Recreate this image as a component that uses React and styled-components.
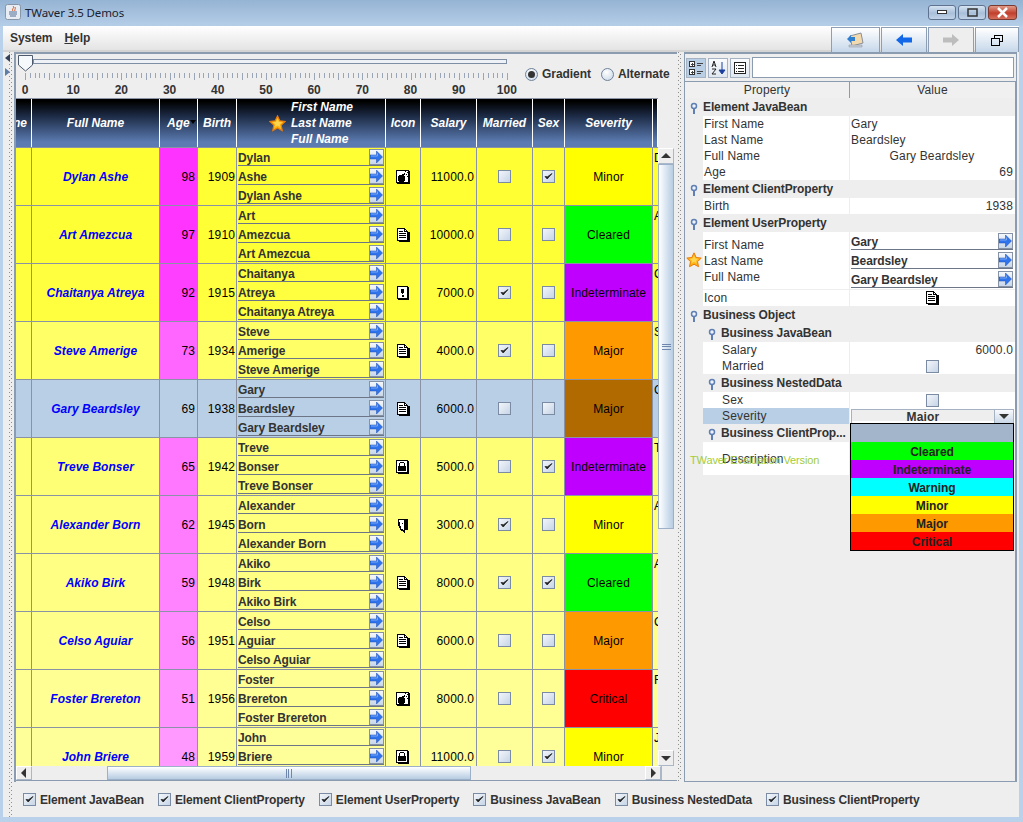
import React from 'react'
import styled, { createGlobalStyle } from 'styled-components'

const GlobalStyle = createGlobalStyle`
  html, body { margin: 0; padding: 0; background: #b9d1ea; }
  * { box-sizing: border-box; }
  body { font-family: "Liberation Sans", Arial, sans-serif; font-size: 12px; color: #333; }
`

const COLUMNS = '16px 128px 38px 39px 149px 35px 56px 56px 32px 88px 5px'
const GRID = '#8a93a6'
const SELECTED = '#b8cfe5'

const SEVERITY = {
  Minor: '#ffff00',
  Cleared: '#00ff00',
  Indeterminate: '#c000ff',
  Major: '#ff9900',
  Critical: '#ff0000',
  Warning: '#00ffff',
}

const people = [
  { first: 'Dylan', last: 'Ashe', age: 98, birth: 1909, icon: 'bomb', salary: '11000.0', married: false, sex: true, severity: 'Minor', note: 'D' },
  { first: 'Art', last: 'Amezcua', age: 97, birth: 1910, icon: 'doc', salary: '10000.0', married: false, sex: false, severity: 'Cleared', note: 'A' },
  { first: 'Chaitanya', last: 'Atreya', age: 92, birth: 1915, icon: 'alert', salary: '7000.0', married: true, sex: false, severity: 'Indeterminate', note: 'C' },
  { first: 'Steve', last: 'Amerige', age: 73, birth: 1934, icon: 'doc', salary: '4000.0', married: true, sex: false, severity: 'Major', note: 'S' },
  { first: 'Gary', last: 'Beardsley', age: 69, birth: 1938, icon: 'doc', salary: '6000.0', married: false, sex: false, severity: 'Major', note: 'G', selected: true },
  { first: 'Treve', last: 'Bonser', age: 65, birth: 1942, icon: 'lock', salary: '5000.0', married: false, sex: true, severity: 'Indeterminate', note: 'T' },
  { first: 'Alexander', last: 'Born', age: 62, birth: 1945, icon: 'door', salary: '3000.0', married: true, sex: false, severity: 'Minor', note: 'A' },
  { first: 'Akiko', last: 'Birk', age: 59, birth: 1948, icon: 'doc', salary: '8000.0', married: true, sex: true, severity: 'Cleared', note: 'A' },
  { first: 'Celso', last: 'Aguiar', age: 56, birth: 1951, icon: 'doc', salary: '6000.0', married: false, sex: false, severity: 'Major', note: 'C' },
  { first: 'Foster', last: 'Brereton', age: 51, birth: 1956, icon: 'bomb', salary: '8000.0', married: false, sex: false, severity: 'Critical', note: 'F' },
  { first: 'John', last: 'Briere', age: 48, birth: 1959, icon: 'lock', salary: '11000.0', married: false, sex: true, severity: 'Minor', note: 'J' },
]

// the colour fades as the age goes down
const fade = (age) => Math.round(51 + ((98 - age) / 50) * 102).toString(16).padStart(2, '0')

const Window = styled.div`
  width: 1023px;
  height: 822px;
  overflow: hidden;
  display: flex;
  flex-direction: column;
  background: #b9d1ea;
`
const TitleBar = styled.div`
  height: 26px;
  flex: none;
  display: flex;
  align-items: center;
  padding: 0 6px 2px 5px;
  background: linear-gradient(#95b3d3, #b5cee8);
`
const TitleText = styled.span`
  font-family: "Noto Sans", sans-serif;
  font-size: 11.5px;
  letter-spacing: -0.1px;
  color: #1a2230;
  margin-left: 4px;
  flex: 1;
`
const WindowButton = styled.div`
  width: ${(p) => p.$w}px;
  height: 15px;
  margin-left: 2px;
  border: 1px solid ${(p) => (p.$close ? '#7a3a30' : '#5f7390')};
  border-radius: 3px;
  display: flex;
  align-items: center;
  justify-content: center;
  background: ${(p) => (p.$close ? 'linear-gradient(#e09a88, #c23f2c 55%, #d5705c)' : 'linear-gradient(#d6e3f2, #a9bfd9 55%, #c2d3e8)')};
`
const Content = styled.div`
  flex: 1;
  min-height: 0;
  margin: 0 4px 5px 3px;
  display: flex;
  flex-direction: column;
  background: #eeeeee;
`
const MenuBar = styled.div`
  height: 26px;
  flex: none;
  display: flex;
  align-items: stretch;
  padding-left: 7px;
  background: linear-gradient(#ffffff, #e4e4e4);
  border-bottom: 2px solid #d4d4d4;
`
const MenuItem = styled.div`
  font-weight: bold;
  letter-spacing: -0.05px;
  color: #333;
  line-height: 24px;
  margin-right: 12px;
  u { text-decoration: underline; }
`
const ToolGroup = styled.div`
  margin-left: auto;
  display: flex;
  gap: 1px;
  margin-top: 1px;
`
const ToolButton = styled.div`
  width: ${(p) => p.$w}px;
  height: 25px;
  display: flex;
  align-items: center;
  justify-content: center;
  border: 1px solid #8d9fb4;
  border-bottom: none;
  background: ${(p) => (p.$disabled ? '#eeeeee' : 'linear-gradient(#ffffff, #c6d7ea)')};
`
const Workspace = styled.div`
  flex: 1;
  min-height: 0;
  display: flex;
`
const Dots = styled.div`
  width: ${(p) => p.$w}px;
  flex: none;
  position: relative;
  background-color: #eeeeee;
  background-image:
    conic-gradient(from 0deg at 1px 1px, transparent 75%, #8f8f8f 0),
    conic-gradient(from 0deg at 1px 1px, transparent 75%, #8f8f8f 0);
  background-size: 4px 4px;
  background-position: ${(p) => p.$x}px 0, ${(p) => p.$x + 2}px 2px;
  background-repeat: repeat-y;
`
const Expander = styled.div`
  position: absolute;
  left: 2px;
  width: 0;
  height: 0;
  border-top: 4px solid transparent;
  border-bottom: 4px solid transparent;
  ${(p) => (p.$right ? 'border-left: 5px solid #5e7ea8;' : 'border-right: 5px solid #33405a;')}
  top: ${(p) => p.$top}px;
`
const Body = styled.div`
  flex: 1;
  min-width: 0;
  display: flex;
  flex-direction: column;
`
const Panes = styled.div`
  height: 730px;
  flex: none;
  display: flex;
`
const LeftPane = styled.div`
  width: 663px;
  flex: none;
  display: flex;
  flex-direction: column;
  border-left: 2px solid #8b9bb0;
  border-top: 2px solid #8b9bb0;
`
const Controls = styled.div`
  height: 44px;
  flex: none;
  display: flex;
  align-items: flex-start;
`
const SliderBlock = styled.div`
  width: 498px;
  flex: none;
  position: relative;
  padding-top: 5px;
`
const SliderTrack = styled.div`
  margin-left: 17px;
  width: 474px;
  height: 5px;
  border: 1px solid #7e8fa5;
  background: #eef2f7;
`
const SliderThumb = styled.svg`
  position: absolute;
  left: 2px;
  top: 1px;
`
const Ticks = styled.svg`
  display: block;
  margin: 9px 0 0 0;
`
const Labels = styled.div`
  display: flex;
  justify-content: space-between;
  margin: 3px 0 0 -3px;
  width: 506px;
`
const RulerLabel = styled.div`
  width: 24px;
  text-align: center;
  font-weight: bold;
  color: #333;
  line-height: 14px;
`
const RadioRow = styled.div`
  display: flex;
  align-items: center;
  margin: 13px 0 0 11px;
`
const RadioDot = styled.div`
  width: 13px;
  height: 13px;
  border-radius: 50%;
  border: 1px solid #6f8199;
  background: radial-gradient(circle at 40% 30%, #ffffff, #c6d5e6);
  display: flex;
  align-items: center;
  justify-content: center;
  margin-right: 4px;
  &::after {
    content: "";
    width: 7px;
    height: 7px;
    border-radius: 50%;
    background: ${(p) => (p.$on ? '#333' : 'transparent')};
  }
`
const RadioLabel = styled.span`
  font-weight: bold;
  letter-spacing: -0.05px;
  margin-right: ${(p) => p.$gap || 0}px;
  color: #333;
`
const TableArea = styled.div`
  height: 668px;
  flex: none;
  display: flex;
`
const TableClip = styled.div`
  width: 642px;
  flex: none;
  overflow: hidden;
  background: #eeeeee;
`
const HeaderRow = styled.div`
  display: grid;
  grid-template-columns: ${COLUMNS};
  height: 50px;
  border-top: 1px solid #8a93a6;
  border-bottom: 1px solid #8a93a6;
`
const HeaderCell = styled.div`
  position: relative;
  display: flex;
  align-items: center;
  justify-content: ${(p) => p.$justify || 'center'};
  padding: ${(p) => p.$pad || '0'};
  overflow: hidden;
  white-space: nowrap;
  font-weight: bold;
  font-style: italic;
  color: #ffffff;
  border-right: 1px solid #ffffff;
  background: linear-gradient(#000000 5%, #1c2a44 35%, #5b7bb2 90%);
`
const SortMark = styled.span`
  position: absolute;
  right: 1px;
  top: 21px;
  border-left: 3px solid transparent;
  border-right: 3px solid transparent;
  border-top: 4px solid #000;
`
const NameStack = styled.div`
  display: flex;
  flex-direction: column;
  line-height: 16px;
  margin-left: 5px;
`
const Row = styled.div`
  display: grid;
  grid-template-columns: ${COLUMNS};
  height: 58px;
  border-bottom: 1px solid ${GRID};
  background: ${(p) => p.$bg};
`
const Cell = styled.div`
  display: flex;
  align-items: center;
  justify-content: ${(p) => p.$justify || 'center'};
  padding: ${(p) => p.$pad || '0'};
  letter-spacing: 0.12px;
  border-right: 1px solid ${GRID};
  background: ${(p) => p.$bg || 'transparent'};
  color: #000;
  white-space: nowrap;
  overflow: hidden;
`
const FullName = styled(Cell)`
  font-weight: bold;
  font-style: italic;
  letter-spacing: 0.03px;
  color: #0000ff;
`
const NoteCell = styled(Cell)`
  align-items: flex-start;
  justify-content: flex-start;
  padding: 3px 0 0 1px;
  border-right: none;
`
const NameCell = styled.div`
  display: flex;
  flex-direction: column;
  gap: 2px;
  padding: 1px 1px 0;
  border-right: 1px solid ${GRID};
`
const NameField = styled.div`
  height: 17px;
  flex: none;
  display: flex;
  align-items: flex-start;
  justify-content: space-between;
  line-height: 18px;
  border-bottom: 1px solid #6d7687;
  font-weight: bold;
  letter-spacing: -0.1px;
  color: #333;
`
const ArrowButton = styled.div`
  width: 15px;
  height: 16px;
  flex: none;
  display: flex;
  align-items: center;
  justify-content: center;
  border: 1px solid #8592a5;
  background: linear-gradient(#f4f7fb, #c9d7e8);
`
const CheckBox = styled.div`
  width: 13px;
  height: 13px;
  flex: none;
  display: flex;
  align-items: center;
  justify-content: center;
  border: 1px solid #7a8ba3;
  background: linear-gradient(135deg, #f3f6fa, #c6d5e7);
`
const VScroll = styled.div`
  width: 16px;
  flex: none;
  display: flex;
  flex-direction: column;
  margin-top: 50px;
  background: #eeeeee;
`
const ScrollButton = styled.div`
  flex: none;
  width: ${(p) => (p.$wide ? '16px' : '100%')};
  height: ${(p) => (p.$wide ? '100%' : '16px')};
  display: flex;
  align-items: center;
  justify-content: center;
  background: #eeeeee;
  border: 1px solid #a9b7c8;
  border-top-color: #ffffff;
  border-left-color: #ffffff;
`
const VThumb = styled.div`
  height: 365px;
  flex: none;
  display: flex;
  align-items: center;
  justify-content: center;
  border: 1px solid #9cb0c8;
  background: linear-gradient(90deg, #ffffff, #dde8f3 45%, #b7cce2);
`
const VGrip = styled.div`
  width: 9px;
  height: 6px;
  border-top: 1px solid #6f86ad;
  border-bottom: 1px solid #6f86ad;
  position: relative;
  &::after {
    content: "";
    position: absolute;
    left: 0;
    right: 0;
    top: 1px;
    height: 1px;
    background: #6f86ad;
  }
`
const ScrollSpacer = styled.div`
  flex: 1;
`
const HScroll = styled.div`
  height: 15px;
  flex: none;
  display: flex;
  border-bottom: 1px solid #8b9bb0;
  background: #eeeeee;
`
const HThumb = styled.div`
  width: 364px;
  flex: none;
  margin-left: 75px;
  display: flex;
  align-items: center;
  justify-content: center;
  border: 1px solid #9cb0c8;
  background: linear-gradient(#ffffff, #dde8f3 45%, #b7cce2);
`
const HGrip = styled.div`
  width: 6px;
  height: 9px;
  border-left: 1px solid #6f86ad;
  border-right: 1px solid #6f86ad;
  position: relative;
  &::after {
    content: "";
    position: absolute;
    top: 0;
    bottom: 0;
    left: 1px;
    width: 1px;
    background: #6f86ad;
  }
`
const HCorner = styled.div`
  width: 16px;
  flex: none;
  border-left: 1px solid #a9b7c8;
`
const RightPane = styled.div`
  width: 333px;
  flex: none;
  display: flex;
  flex-direction: column;
  border-top: 2px solid #8b9bb0;
  border-left: 1px solid #8b9bb0;
  border-right: 1px solid #8b9bb0;
  border-bottom: 1px solid #8b9bb0;
`
const PropToolbar = styled.div`
  height: 27px;
  flex: none;
  display: flex;
  align-items: center;
  gap: 2px;
  padding: 0 1px;
`
const PropToggle = styled.div`
  width: 20px;
  height: 20px;
  display: flex;
  align-items: center;
  justify-content: center;
  border: 1px solid #a4b2c4;
  background: ${(p) => (p.$on ? '#b8cfe5' : 'linear-gradient(#fafbfd, #dfe7f0)')};
`
const SearchBox = styled.div`
  flex: 1;
  height: 21px;
  margin-right: 1px;
  border: 1px solid #8b9bb0;
  background: #ffffff;
`
const PropHeader = styled.div`
  display: grid;
  grid-template-columns: 165px 1fr;
  height: 17px;
  flex: none;
  border-top: 1px solid #8b9bb0;
  border-bottom: 1px solid #8b9bb0;
`
const PropHeaderCell = styled.div`
  text-align: center;
  line-height: 16px;
  letter-spacing: 0.12px;
  color: #333;
  border-right: 1px solid #8b9bb0;
  background: #f0f0f0;
`
const PropTable = styled.div`
  flex: 1;
  min-height: 0;
  border-right: 1px solid #8b9bb0;
`
const SectionRow = styled.div`
  height: 18px;
  display: flex;
  align-items: center;
  font-weight: bold;
  letter-spacing: -0.12px;
  color: #333;
  padding-left: ${(p) => (p.$nested ? 23 : 5)}px;
  white-space: nowrap;
`
const SectionPin = styled.svg`
  margin-right: 5px;
  margin-top: 3px;
  flex: none;
`
const PropRow = styled.div`
  position: relative;
  display: grid;
  grid-template-columns: 165px 1fr;
  height: ${(p) => p.$h || 16}px;
`
const PropName = styled.div`
  margin-left: 18px;
  display: flex;
  flex-direction: column;
  justify-content: center;
  padding-left: ${(p) => (p.$nested ? 19 : 1)}px;
  line-height: 16px;
  letter-spacing: 0.15px;
  color: #333;
  background: ${(p) => (p.$selected ? SELECTED : '#ffffff')};
  border-bottom: 1px solid #eeeeee;
  border-right: 1px solid #eeeeee;
`
const PropValue = styled.div`
  position: relative;
  display: flex;
  align-items: center;
  justify-content: ${(p) => p.$justify || 'flex-start'};
  padding: 0 2px 0 1px;
  line-height: 16px;
  letter-spacing: 0.15px;
  color: #333;
  background: #ffffff;
  border-bottom: 1px solid #eeeeee;
`
const FieldStack = styled.div`
  flex: 1;
  display: flex;
  flex-direction: column;
  gap: 2px;
  align-self: flex-start;
  padding-top: 1px;
`
const Combo = styled.div`
  flex: 1;
  height: 15px;
  display: flex;
  border: 1px solid #a4b2c4;
  font-weight: bold;
  line-height: 14px;
  overflow: hidden;
  margin-right: -1px;
`
const ComboText = styled.div`
  flex: 1;
  text-align: center;
  background: #eeeeee;
  height: 11px;
  overflow: hidden;
`
const ComboArrow = styled.div`
  width: 19px;
  display: flex;
  align-items: center;
  justify-content: center;
  border-left: 1px solid #a4b2c4;
  background: linear-gradient(#f8fafc, #c9d7e8);
`
const Popup = styled.div`
  position: absolute;
  left: 0;
  top: 15px;
  width: 164px;
  z-index: 2;
  border: 1px solid #000;
`
const PopupItem = styled.div`
  height: 18px;
  line-height: 20px;
  overflow: hidden;
  text-align: center;
  font-weight: bold;
  letter-spacing: -0.05px;
  color: #222;
  background: ${(p) => p.$bg};
`
const Watermark = styled.div`
  position: absolute;
  left: 5px;
  top: 12px;
  font-size: 11px;
  letter-spacing: -0.12px;
  color: #a2cc3a;
  white-space: nowrap;
  z-index: 1;
`
const StarSlot = styled.div`
  position: absolute;
  left: 1px;
  top: 20px;
`
const CheckRow = styled.div`
  height: 35px;
  flex: none;
  display: flex;
  align-items: center;
  gap: 14px;
  padding-left: 9px;
`
const CheckItem = styled.div`
  display: flex;
  align-items: center;
  gap: 4px;
  font-weight: bold;
  letter-spacing: -0.13px;
  color: #333;
`

const Arrow = () => (
  <svg width="13" height="14" viewBox="0 0 13 14">
    <path d="M0 5h6.500V1l6 6-6 6V9H0z" fill="#2f74ec" stroke="#1d4fb4" strokeWidth="0.500" />
    <path d="M1 6h6.500V3.500" fill="none" stroke="#8fb8f8" strokeWidth="0.800" />
  </svg>
)

const Check = () => (
  <svg width="9" height="9" viewBox="0 0 9 9">
    <path d="M1 4.500L3.200 7 8 1.500 3.500 4.800z" fill="#222" stroke="#222" strokeWidth="0.800" />
  </svg>
)

const Star = ({ size = 16 }) => (
  <svg width={size} height={size} viewBox="0 0 16 16">
    <path d="M8 .8l2.200 4.700 5 .6-3.700 3.500 1 5.100L8 12.200l-4.500 2.500 1-5.100L.8 6.100l5-.6z" fill="#ffb414" stroke="#ec7a08" />
    <path d="M8 3.500l1.300 3 3 .3-2.200 2 .5 2.600L8 9.800 5.400 11.400l.5-2.600-2.200-2 3-.3z" fill="#ffd650" />
  </svg>
)

const Pin = () => (
  <SectionPin width="8" height="13" viewBox="0 0 8 13">
    <circle cx="4" cy="4" r="2.500" fill="#eef3fa" stroke="#5f7fb5" strokeWidth="1.500" />
    <rect x="3" y="6" width="2" height="6" fill="#5f7fb5" />
  </SectionPin>
)

const Triangle = ({ dir = 'up', color = '#333' }) => {
  const shapes = {
    up: '0,7 5,2 10,7',
    down: '0,3 10,3 5,8',
    left: '7,0 7,10 2,5',
    right: '3,0 3,10 8,5',
  }
  return (
    <svg width="10" height="10" viewBox="0 0 10 10">
      <polygon points={shapes[dir]} fill={color} />
    </svg>
  )
}

const pixelIcons = {
  bomb: (
    <>
      <rect x="1.500" y="1.500" width="12" height="12" fill="#fff" stroke="#000" />
      <path d="M14 2h1v13H2v-1h12z" fill="#000" />
      <circle cx="6.500" cy="9.500" r="3.800" fill="#000" />
      <path d="M7 5h2V3.500h1V6H7zM10 2h1v1h-1zM12 3h1v1h-1zM11 5h1v1h-1zM12 7h1v1h-1z" fill="#000" />
    </>
  ),
  doc: (
    <>
      <path d="M2.500 1.500h7l3 3v9h-10z" fill="#fff" stroke="#000" />
      <path d="M9 1h1v3h3v1H9zM4 4h4v1H4zM4 6h7v1H4zM4 8h7v1H4zM4 10h7v1H4zM13 5h2v10H4v-1h9z" fill="#000" />
    </>
  ),
  alert: (
    <>
      <rect x="2.500" y="1.500" width="10" height="12" fill="#fff" stroke="#000" />
      <path d="M13 2h1v13H3v-1h10zM6 4h3v4H8v1H7V8H6zM6.500 10h2v2h-2z" fill="#000" />
    </>
  ),
  lock: (
    <>
      <rect x="1.500" y="1.500" width="11" height="12" fill="#fff" stroke="#000" />
      <path d="M13 2h1v13H3v-1h10zM5 3h4v1H5zM4 4h1v3H4zM9 4h1v3H9zM3 7h8v5H3z" fill="#000" />
    </>
  ),
  door: (
    <>
      <path d="M3 2h10v11h-3v3L6 13.500 3 8z" fill="#000" />
      <path d="M4 3h5v10.500l-3-2z" fill="#fff" />
      <path d="M7 6h1v1H7z" fill="#000" />
    </>
  ),
}

const PixelIcon = ({ kind }) => (
  <svg width="16" height="16" viewBox="0 0 16 16" shapeRendering="crispEdges">
    {pixelIcons[kind]}
  </svg>
)

const ruler = () => {
  const marks = []
  for (let i = 0; i <= 100; i++) {
    const x = 9 + i * 4.82
    marks.push(<rect key={i} x={Math.round(x)} y="0" width="1" height={i % 5 === 0 ? 7 : 5} fill="#9aa6b6" />)
  }
  return marks
}

const Slider = () => (
  <SliderBlock>
    <SliderTrack />
    <SliderThumb width="16" height="17" viewBox="0 0 16 17">
      <path d="M.5.5h14V10L7.500 16 .5 10z" fill="#f6f9fc" stroke="#4d5a6e" />
    </SliderThumb>
    <Ticks width="498" height="7">{ruler()}</Ticks>
    <Labels>
      {[0, 10, 20, 30, 40, 50, 60, 70, 80, 90, 100].map((n) => <RulerLabel key={n}>{n}</RulerLabel>)}
    </Labels>
  </SliderBlock>
)

const PersonRow = ({ person }) => {
  const { first, last, age, birth, icon, salary, married, sex, severity, note, selected } = person
  const full = `${first} ${last}`
  const tone = fade(age)
  const rowBg = selected ? SELECTED : `#ffff${tone}`
  const severityBg = selected ? '#b06a00' : SEVERITY[severity]
  return (
    <Row $bg={rowBg}>
      <Cell />
      <FullName>{full}</FullName>
      <Cell $justify="flex-end" $pad="0 2px 0 0" $bg={selected ? SELECTED : `#ff${tone}ff`}>{age}</Cell>
      <Cell $justify="flex-end" $pad="0 1px 0 0">{birth}</Cell>
      <NameCell>
        {[first, last, full].map((text, i) => (
          <NameField key={i}>
            {text}
            <ArrowButton><Arrow /></ArrowButton>
          </NameField>
        ))}
      </NameCell>
      <Cell><PixelIcon kind={icon} /></Cell>
      <Cell $justify="flex-end" $pad="0 2px 0 0">{salary}</Cell>
      <Cell><CheckBox>{married && <Check />}</CheckBox></Cell>
      <Cell><CheckBox>{sex && <Check />}</CheckBox></Cell>
      <Cell $bg={severityBg}>{severity}</Cell>
      <NoteCell>{note}</NoteCell>
    </Row>
  )
}

const PeopleTable = () => (
  <TableClip>
    <HeaderRow>
      <HeaderCell $justify="flex-end" $pad="0 4px 0 0">ne</HeaderCell>
      <HeaderCell>Full Name</HeaderCell>
      <HeaderCell $justify="flex-start" $pad="0 0 0 7px">Age<SortMark /></HeaderCell>
      <HeaderCell>Birth</HeaderCell>
      <HeaderCell>
        <Star size={17} />
        <NameStack><span>First Name</span><span>Last Name</span><span>Full Name</span></NameStack>
      </HeaderCell>
      <HeaderCell>Icon</HeaderCell>
      <HeaderCell>Salary</HeaderCell>
      <HeaderCell>Married</HeaderCell>
      <HeaderCell>Sex</HeaderCell>
      <HeaderCell>Severity</HeaderCell>
      <HeaderCell />
    </HeaderRow>
    {people.map((p) => <PersonRow key={p.first} person={p} />)}
  </TableClip>
)

const Section = ({ nested, children }) => (
  <SectionRow $nested={nested}><Pin />{children}</SectionRow>
)

const Prop = ({ name, value, justify, nested }) => (
  <PropRow>
    <PropName $nested={nested}>{name}</PropName>
    <PropValue $justify={justify}>{value}</PropValue>
  </PropRow>
)

const PropertySheet = () => (
  <PropTable>
    <Section>Element JavaBean</Section>
    <Prop name="First Name" value="Gary" />
    <Prop name="Last Name" value="Beardsley" />
    <Prop name="Full Name" value="Gary Beardsley" justify="center" />
    <Prop name="Age" value="69" justify="flex-end" />
    <Section>Element ClientProperty</Section>
    <Prop name="Birth" value="1938" justify="flex-end" />
    <Section>Element UserProperty</Section>
    <PropRow $h={58}>
      <StarSlot><Star /></StarSlot>
      <PropName><span>First Name</span><span>Last Name</span><span>Full Name</span></PropName>
      <PropValue>
        <FieldStack>
          {['Gary', 'Beardsley', 'Gary Beardsley'].map((text) => (
            <NameField key={text}>{text}<ArrowButton><Arrow /></ArrowButton></NameField>
          ))}
        </FieldStack>
      </PropValue>
    </PropRow>
    <Prop name="Icon" value={<PixelIcon kind="doc" />} justify="center" />
    <Section>Business Object</Section>
    <Section nested>Business JavaBean</Section>
    <Prop nested name="Salary" value="6000.0" justify="flex-end" />
    <Prop nested name="Married" value={<CheckBox />} justify="center" />
    <Section nested>Business NestedData</Section>
    <Prop nested name="Sex" value={<CheckBox />} justify="center" />
    <PropRow>
      <PropName $nested $selected>Severity</PropName>
      <PropValue>
        <Combo>
          <ComboText>Major</ComboText>
          <ComboArrow><Triangle dir="down" /></ComboArrow>
        </Combo>
        <Popup>
          <PopupItem $bg="#a3b5ca" />
          {['Cleared', 'Indeterminate', 'Warning', 'Minor', 'Major', 'Critical'].map((s) => (
            <PopupItem key={s} $bg={SEVERITY[s]}>{s}</PopupItem>
          ))}
        </Popup>
      </PropValue>
    </PropRow>
    <Section nested>Business ClientProp...</Section>
    <PropRow $h={34}>
      <PropName $nested>Description</PropName>
      <PropValue />
      <Watermark>TWaver Evaluation Version</Watermark>
    </PropRow>
  </PropTable>
)

const filters = [
  'Element JavaBean',
  'Element ClientProperty',
  'Element UserProperty',
  'Business JavaBean',
  'Business NestedData',
  'Business ClientProperty',
]

function App() {
  return (
    <Window>
      <GlobalStyle />
      <TitleBar>
        <svg width="16" height="16" viewBox="0 0 16 16">
          <rect x="0.500" y="0.500" width="15" height="15" rx="2" fill="#e8edf4" stroke="#8795a8" />
          <path d="M8 2c2 2-2 3 0 5M10 3c1 2-1 3 0 4" fill="none" stroke="#d9541e" />
          <path d="M4 8h8M4 10h8M5 12h6" stroke="#4f6e96" />
        </svg>
        <TitleText>TWaver 3.5 Demos</TitleText>
        <WindowButton $w={28}>
          <svg width="10" height="5"><rect x="0.500" y="0.500" width="9" height="3" fill="#fff" stroke="#333" /></svg>
        </WindowButton>
        <WindowButton $w={28}>
          <svg width="11" height="9"><rect x="1" y="1" width="9" height="7" fill="none" stroke="#333" strokeWidth="1.500" /></svg>
        </WindowButton>
        <WindowButton $w={29} $close>
          <svg width="13" height="11" viewBox="0 0 13 11"><path d="M2 1l9 9M11 1l-9 9" stroke="#fff" strokeWidth="2.500" /></svg>
        </WindowButton>
      </TitleBar>
      <Content>
        <MenuBar>
          <MenuItem>System</MenuItem>
          <MenuItem><u>H</u>elp</MenuItem>
          <ToolGroup>
            <ToolButton $w={49}>
              <svg width="18" height="16" viewBox="0 0 18 16">
                <path d="M3 4l11-3 2 10-11 3z" fill="#f3d9ae" stroke="#8a8f98" />
                <path d="M2 13h13v2H2z" fill="#c8ced6" stroke="#8a8f98" strokeWidth="0.500" />
                <path d="M0 7l4-4v2h4v4H4v2z" fill="#2f7fd0" />
              </svg>
            </ToolButton>
            <ToolButton $w={46}>
              <svg width="16" height="12" viewBox="0 0 16 12"><path d="M0 6l7-6v3.500h9v5H7V12z" fill="#1268e8" /></svg>
            </ToolButton>
            <ToolButton $w={46} $disabled>
              <svg width="16" height="12" viewBox="0 0 16 12"><path d="M16 6L9 0v3.500H0v5h9V12z" fill="#bdbdbd" /></svg>
            </ToolButton>
            <ToolButton $w={44}>
              <svg width="12" height="11" viewBox="0 0 12 11" shapeRendering="crispEdges">
                <path d="M3.500 3V.5h8v6H8.500M.5 3.500h8v7h-8z" fill="none" stroke="#000" />
              </svg>
            </ToolButton>
          </ToolGroup>
        </MenuBar>
        <Workspace>
          <Dots $w={11} $x={6}>
            <Expander $top={2} />
            <Expander $top={16} $right />
          </Dots>
          <Body>
            <Panes>
              <LeftPane>
                <Controls>
                  <Slider />
                  <RadioRow>
                    <RadioDot $on />
                    <RadioLabel $gap={10}>Gradient</RadioLabel>
                    <RadioDot />
                    <RadioLabel>Alternate</RadioLabel>
                  </RadioRow>
                </Controls>
                <TableArea>
                  <PeopleTable />
                  <VScroll>
                    <ScrollButton><Triangle dir="up" /></ScrollButton>
                    <VThumb><VGrip /></VThumb>
                    <ScrollSpacer />
                    <ScrollButton><Triangle dir="down" /></ScrollButton>
                  </VScroll>
                </TableArea>
                <HScroll>
                  <ScrollButton $wide><Triangle dir="left" /></ScrollButton>
                  <HThumb><HGrip /></HThumb>
                  <ScrollSpacer />
                  <ScrollButton $wide><Triangle dir="right" /></ScrollButton>
                  <HCorner />
                </HScroll>
              </LeftPane>
              <Dots $w={7} $x={1} />
              <RightPane>
                <PropToolbar>
                  <PropToggle $on>
                    <svg width="16" height="16" viewBox="0 0 16 16" shapeRendering="crispEdges">
                      <path d="M1.500 1.500h5v5h-5zM1.500 9.500h5v5h-5z" fill="#fff" stroke="#333" />
                      <path d="M2.500 4h3M4 2.500v3M2.500 12h3M4 10.500v3M9 3h6M9 5h4M9 11h6M9 13h4" stroke="#444" />
                    </svg>
                  </PropToggle>
                  <PropToggle>
                    <svg width="16" height="16" viewBox="0 0 16 16">
                      <path d="M2 7l2-6 2 6M3 5h2M2 9h4l-4 5h4" fill="none" stroke="#222" />
                      <path d="M12 2v9M12 14l-3-4h6z" stroke="#1b3e9e" fill="#1b3e9e" />
                    </svg>
                  </PropToggle>
                  <PropToggle>
                    <svg width="14" height="14" viewBox="0 0 14 14" shapeRendering="crispEdges">
                      <path d="M1.500 1.500h11v11h-11z" fill="#fff" stroke="#222" />
                      <path d="M3 4h1M5 4h6M3 7h1M5 7h6M3 10h1M5 10h6" stroke="#222" />
                    </svg>
                  </PropToggle>
                  <SearchBox />
                </PropToolbar>
                <PropHeader>
                  <PropHeaderCell>Property</PropHeaderCell>
                  <PropHeaderCell>Value</PropHeaderCell>
                </PropHeader>
                <PropertySheet />
              </RightPane>
            </Panes>
            <CheckRow>
              {filters.map((f) => (
                <CheckItem key={f}><CheckBox><Check /></CheckBox>{f}</CheckItem>
              ))}
            </CheckRow>
          </Body>
        </Workspace>
      </Content>
    </Window>
  )
}

export default App
